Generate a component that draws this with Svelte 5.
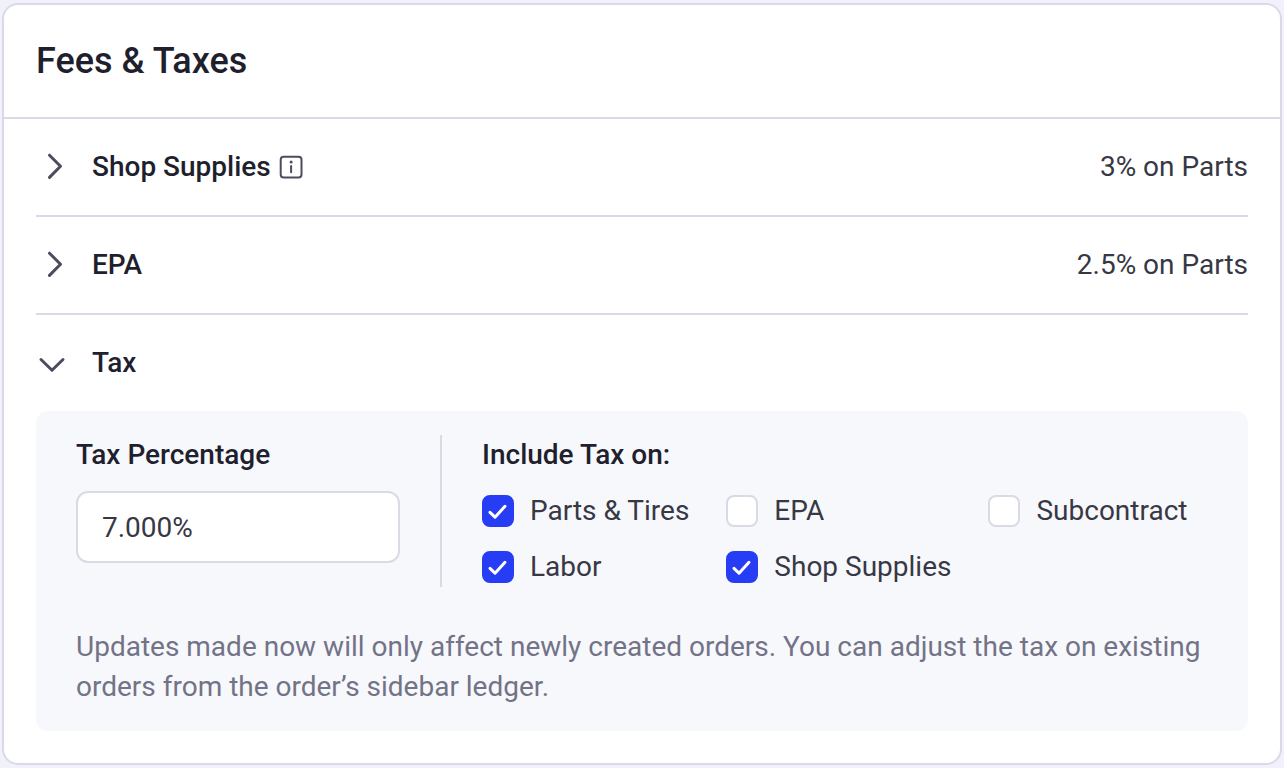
<script>
  let rate = $state('7.000%');
  let fees = $state([
    { name: 'Shop Supplies', summary: '3% on Parts', info: true },
    { name: 'EPA', summary: '2.5% on Parts', info: false }
  ]);
  let taxOpen = $state(true);
  let targets = $state([
    { label: 'Parts & Tires', checked: true },
    { label: 'EPA', checked: false },
    { label: 'Subcontract', checked: false },
    { label: 'Labor', checked: true },
    { label: 'Shop Supplies', checked: true }
  ]);
</script>

<main>
  <section class="card">
    <header>
      <h1>Fees &amp; Taxes</h1>
    </header>

    <div class="rows">
      {#each fees as fee}
        <div class="row ruled">
          <button type="button" class="toggle" aria-expanded="false">
            <svg class="chevron" viewBox="0 0 32 32" aria-hidden="true">
              <path d="M13.5 4.2 24.5 15.3 13.5 26.4" />
            </svg>
            <span>{fee.name}</span>
            {#if fee.info}
              <svg class="info" viewBox="0 0 24 24" aria-hidden="true">
                <rect x="1.7" y="1.7" width="20.8" height="20.8" rx="3" />
                <path d="M12.1 11V17.3" />
                <circle cx="12.1" cy="6.9" r="1.5" />
              </svg>
            {/if}
          </button>
          <span class="summary">{fee.summary}</span>
        </div>
      {/each}

      <div class="row">
        <button
          type="button"
          class="toggle"
          aria-expanded={taxOpen}
          onclick={() => (taxOpen = !taxOpen)}
        >
          <svg class="chevron" viewBox="0 0 32 32" aria-hidden="true">
            {#if taxOpen}
              <path d="M5 12.5 16 23.3 27 12.5" />
            {:else}
              <path d="M13.5 4.2 24.5 15.3 13.5 26.4" />
            {/if}
          </svg>
          <span>Tax</span>
        </button>
      </div>

      {#if taxOpen}
        <div class="panel">
          <div class="settings">
            <div class="rate">
              <label class="title" for="rate">Tax Percentage</label>
              <input id="rate" type="text" bind:value={rate} />
            </div>
            <fieldset>
              <legend class="title">Include Tax on:</legend>
              <div class="targets">
                {#each targets as target}
                  <label class="target">
                    <span class="box">
                      <input type="checkbox" bind:checked={target.checked} />
                      {#if target.checked}
                        <svg viewBox="0 0 32 32" aria-hidden="true">
                          <path d="M8 17.4 13 22.2 23 11.3" />
                        </svg>
                      {/if}
                    </span>
                    <span>{target.label}</span>
                  </label>
                {/each}
              </div>
            </fieldset>
          </div>
          <p>
            Updates made now will only affect newly created orders. You can adjust the tax on
            existing orders from the order’s sidebar ledger.
          </p>
        </div>
      {/if}
    </div>
  </section>
</main>

<style>
  :global(body) {
    background: #f0f1fa;
  }

  main {
    padding: 3px 2px;
    font-family: Roboto, 'Liberation Sans', sans-serif;
    font-size: 28px;
    line-height: 40px;
    color: #383845;
  }

  .card {
    border: 2px solid #d9dae6;
    border-radius: 16px;
    background: #fff;
  }

  header {
    padding: 32px;
    border-bottom: 2px solid #d9dae6;
  }

  h1 {
    margin: 0;
    font-size: 36px;
    line-height: 48px;
    font-weight: 500;
    color: #1f1f2e;
  }

  .rows {
    padding: 0 32px 32px;
  }

  .row {
    display: flex;
    align-items: center;
    justify-content: space-between;
    padding: 28px 0;
  }

  .ruled {
    border-bottom: 2px solid #d9dae6;
  }

  .toggle {
    display: flex;
    align-items: center;
    padding: 0;
    border: 0;
    background: none;
    font: inherit;
    font-weight: 500;
    color: #1f1f2e;
    cursor: pointer;
  }

  svg {
    fill: none;
    stroke: #4c4c5e;
    stroke-linecap: round;
    stroke-linejoin: round;
  }

  .chevron {
    width: 32px;
    height: 32px;
    margin-right: 24px;
    stroke-width: 3;
  }

  .info {
    width: 24px;
    height: 24px;
    margin-left: 8px;
    stroke-width: 2;
  }

  .info circle {
    fill: #4c4c5e;
    stroke: none;
  }

  .panel {
    padding: 24px 40px;
    border-radius: 12px;
    background: #f7f8fc;
  }

  .settings {
    display: flex;
  }

  .rate {
    flex: 0 1 324px;
    display: flex;
    flex-direction: column;
    gap: 16px;
    padding-right: 40px;
    border-right: 2px solid #d9dae6;
  }

  .title {
    padding: 0;
    font-weight: 500;
    color: #1f1f2e;
  }

  input {
    box-sizing: border-box;
    margin: 0;
    border: 2px solid #d9dae6;
    background: #fff;
  }

  #rate {
    width: 100%;
    height: 72px;
    padding: 0 24px;
    border-radius: 12px;
    font: inherit;
    color: inherit;
  }

  fieldset {
    flex: 1;
    min-width: 0;
    margin: 0;
    padding: 0 0 0 40px;
    border: 0;
  }

  .targets {
    display: grid;
    grid-template-columns: repeat(3, max-content);
    gap: 16px 37px;
    padding-top: 16px;
  }

  .target {
    display: flex;
    align-items: center;
    gap: 16px;
  }

  .box {
    display: grid;
    width: 32px;
    height: 32px;
  }

  .box > * {
    grid-area: 1 / 1;
    width: 32px;
    height: 32px;
  }

  .box input {
    appearance: none;
    border-radius: 8px;
  }

  .box input:checked {
    border-color: #263df5;
    background: #263df5;
  }

  .box svg {
    stroke: #fff;
    stroke-width: 3;
    pointer-events: none;
  }

  p {
    margin: 40px 0 0;
    color: #737387;
  }
</style>
